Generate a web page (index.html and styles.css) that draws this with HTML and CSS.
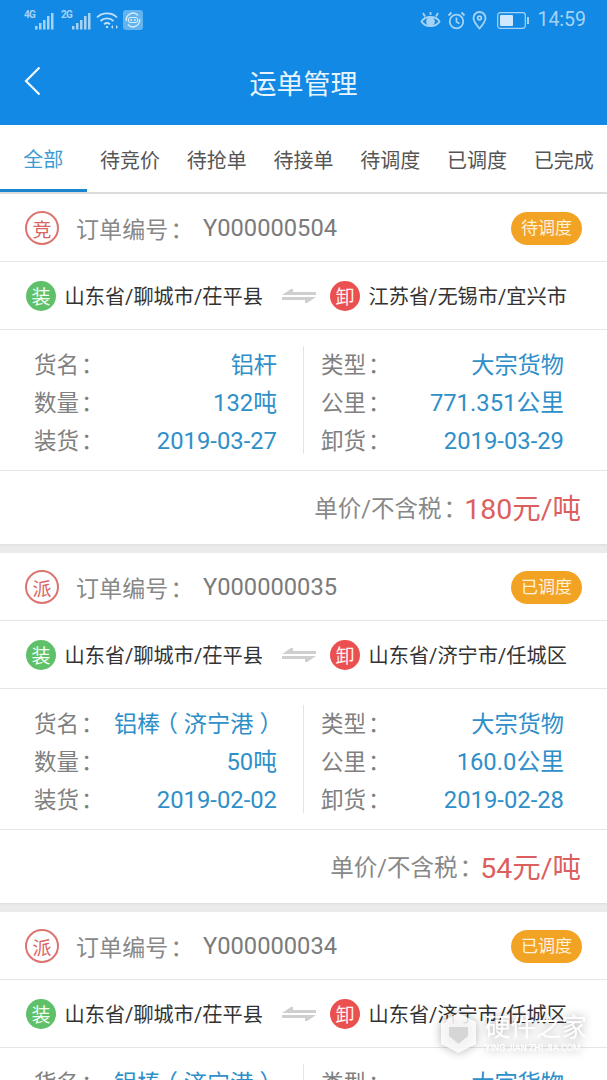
FILE: index.html
```html
<!DOCTYPE html>
<html lang="zh-CN">
<head>
<meta charset="utf-8">
<title>运单管理</title>
<link rel="stylesheet" href="styles.css">
</head>
<body>
<div class="screen">
  <header class="appbar">
    <div class="status">
      <div class="status-group">
        <span class="net"><small>4G</small><svg width="20" height="18" viewBox="0 0 20 18"><g fill="#a5d3f5"><rect x="0" y="14" width="2.500" height="3.500"/><rect x="4" y="11" width="2.500" height="6.500"/><rect x="8" y="8" width="2.500" height="9.500"/><rect x="12" y="4" width="2.500" height="13.500"/><rect x="16" y="1" width="2.500" height="16.500"/></g></svg></span>
        <span class="net net-2"><small>2G</small><svg width="20" height="18" viewBox="0 0 20 18"><g fill="#a5d3f5"><rect x="0" y="14" width="2.500" height="3.500"/><rect x="4" y="11" width="2.500" height="6.500"/><rect x="8" y="8" width="2.500" height="9.500"/><rect x="12" y="4" width="2.500" height="13.500"/><rect x="16" y="1" width="2.500" height="16.500"/></g></svg></span>
        <svg class="wifi" width="23" height="18" viewBox="0 0 23 18" fill="none" stroke="#bfe0f8" stroke-width="1.800"><path d="M1 6.500C6 1 16 1 21 6.500"/><path d="M4.500 10C8 6.500 14 6.500 17.500 10"/><path d="M8 13.200C9.800 11.800 12.200 11.800 14 13.200"/><circle cx="11" cy="16" r="1.200" fill="#bfe0f8" stroke="none"/><path d="M17 14l-2 2 2 2zM20 14l2 2-2 2z" fill="#bfe0f8" stroke="none"/></svg>
        <svg class="app" width="20" height="20" viewBox="0 0 20 20"><rect width="20" height="20" rx="3" fill="#61b4f0"/><path d="M3.500 11A6.600 6.600 0 0 1 15 5.500M16.500 9A6.600 6.600 0 0 1 5 14.500" fill="none" stroke="#d5ecfb" stroke-width="1.400"/><rect x="5.500" y="7.500" width="9" height="5" rx="1.500" fill="none" stroke="#d5ecfb" stroke-width="1"/><circle cx="8" cy="10" r=".9" fill="#d5ecfb"/><circle cx="12" cy="10" r=".9" fill="#d5ecfb"/></svg>
      </div>
      <div class="status-group status-right">
        <svg width="21" height="18" viewBox="0 0 21 18" fill="none" stroke="#a5d3f5" stroke-width="1.800"><path d="M1.500 10.500C5 4.500 16 4.500 19.500 10.500C16 16.500 5 16.500 1.500 10.500Z"/><circle cx="10.500" cy="10.500" r="3.500" fill="#a5d3f5"/><path d="M3 2l2 3.500M18 2l-2 3.500M10.500 1v3"/></svg>
        <svg width="19" height="19" viewBox="0 0 19 19" fill="none" stroke="#a5d3f5" stroke-width="1.800"><circle cx="9.500" cy="10.500" r="6.800"/><path d="M9.500 6.500v4.500l3 1.500M1.500 4.500l3-3M17.500 4.500l-3-3"/></svg>
        <svg width="15" height="19" viewBox="0 0 15 19" fill="none" stroke="#a5d3f5" stroke-width="1.800"><path d="M7.500 17.500C3.500 13 1.500 10 1.500 7a6 6 0 0 1 12 0c0 3-2 6-6 10.500Z"/><circle cx="7.500" cy="7" r="1.800"/></svg>
        <svg class="batt" width="32" height="17" viewBox="0 0 32 17"><rect x=".7" y=".7" width="27.600" height="15.600" rx="2.500" fill="none" stroke="#a5d3f5" stroke-width="1.200"/><rect x="3" y="3" width="13" height="11" rx="1" fill="#cfe8fb"/><rect x="30" y="5" width="2" height="7" fill="#a5d3f5"/></svg>
        <span class="clock">14:59</span>
      </div>
    </div>
    <div class="titlebar">
      <svg class="back" width="17" height="30" viewBox="0 0 17 30" fill="none" stroke="#f2f9ff" stroke-width="2.200"><path d="M15.500 1.500L2 15l13.500 13.500"/></svg>
      <h1 class="title">运单管理</h1>
    </div>
  </header>

  <nav class="tabs">
    <a class="tab tab-active">全部</a>
    <a class="tab">待竞价</a>
    <a class="tab">待抢单</a>
    <a class="tab">待接单</a>
    <a class="tab">待调度</a>
    <a class="tab">已调度</a>
    <a class="tab">已完成</a>
  </nav>

  <article class="card">
    <div class="card-head">
      <span class="stamp">竞</span>
      <span class="order-label">订单编号<span class="punct">：</span></span>
      <span class="order-no">Y000000504</span>
      <span class="badge">待调度</span>
    </div>
    <div class="route">
      <span class="dot dot-load">装</span>
      <span class="place">山东省/聊城市/茌平县</span>
      <svg class="swap" width="34" height="16" viewBox="0 0 34 16" fill="#cfcfcf"><path d="M0 7L9 1h2v3h23v3zM0 9h34L25 15h-2v-3H0z"/></svg>
      <span class="dot dot-unload">卸</span>
      <span class="place">江苏省/无锡市/宜兴市</span>
    </div>
    <div class="details">
      <dl class="col">
        <div class="row"><dt>货名<span class="punct">：</span></dt><dd class="val-text">铝杆</dd></div>
        <div class="row"><dt>数量<span class="punct">：</span></dt><dd>132吨</dd></div>
        <div class="row"><dt>装货<span class="punct">：</span></dt><dd>2019-03-27</dd></div>
      </dl>
      <dl class="col col-right">
        <div class="row"><dt>类型<span class="punct">：</span></dt><dd class="val-text">大宗货物</dd></div>
        <div class="row"><dt>公里<span class="punct">：</span></dt><dd>771.351公里</dd></div>
        <div class="row"><dt>卸货<span class="punct">：</span></dt><dd>2019-03-29</dd></div>
      </dl>
    </div>
    <div class="price"><span class="price-label">单价/不含税<span class="punct">：</span></span><span class="price-value">180元/吨</span></div>
  </article>

  <article class="card">
    <div class="card-head">
      <span class="stamp">派</span>
      <span class="order-label">订单编号<span class="punct">：</span></span>
      <span class="order-no">Y000000035</span>
      <span class="badge">已调度</span>
    </div>
    <div class="route">
      <span class="dot dot-load">装</span>
      <span class="place">山东省/聊城市/茌平县</span>
      <svg class="swap" width="34" height="16" viewBox="0 0 34 16" fill="#cfcfcf"><path d="M0 7L9 1h2v3h23v3zM0 9h34L25 15h-2v-3H0z"/></svg>
      <span class="dot dot-unload">卸</span>
      <span class="place">山东省/济宁市/任城区</span>
    </div>
    <div class="details">
      <dl class="col">
        <div class="row"><dt>货名<span class="punct">：</span></dt><dd class="val-text">铝棒<span class="paren">（</span>济宁港<span class="paren">）</span></dd></div>
        <div class="row"><dt>数量<span class="punct">：</span></dt><dd>50吨</dd></div>
        <div class="row"><dt>装货<span class="punct">：</span></dt><dd>2019-02-02</dd></div>
      </dl>
      <dl class="col col-right">
        <div class="row"><dt>类型<span class="punct">：</span></dt><dd class="val-text">大宗货物</dd></div>
        <div class="row"><dt>公里<span class="punct">：</span></dt><dd>160.0公里</dd></div>
        <div class="row"><dt>卸货<span class="punct">：</span></dt><dd>2019-02-28</dd></div>
      </dl>
    </div>
    <div class="price"><span class="price-label">单价/不含税<span class="punct">：</span></span><span class="price-value">54元/吨</span></div>
  </article>

  <article class="card">
    <div class="card-head">
      <span class="stamp">派</span>
      <span class="order-label">订单编号<span class="punct">：</span></span>
      <span class="order-no">Y000000034</span>
      <span class="badge">已调度</span>
    </div>
    <div class="route">
      <span class="dot dot-load">装</span>
      <span class="place">山东省/聊城市/茌平县</span>
      <svg class="swap" width="34" height="16" viewBox="0 0 34 16" fill="#cfcfcf"><path d="M0 7L9 1h2v3h23v3zM0 9h34L25 15h-2v-3H0z"/></svg>
      <span class="dot dot-unload">卸</span>
      <span class="place">山东省/济宁市/任城区</span>
    </div>
    <div class="details">
      <dl class="col">
        <div class="row"><dt>货名<span class="punct">：</span></dt><dd class="val-text">铝棒<span class="paren">（</span>济宁港<span class="paren">）</span></dd></div>
      </dl>
      <dl class="col col-right">
        <div class="row"><dt>类型<span class="punct">：</span></dt><dd class="val-text">大宗货物</dd></div>
      </dl>
    </div>
  </article>

  <div class="watermark">
    <svg width="37" height="42" viewBox="0 0 37 42"><path d="M18.500 1L36 10v22L18.500 41 1 32V10Z" fill="#fff" fill-opacity=".85"/><path d="M9 15h19v9l-9.500 8L9 24Z" fill="#c9c9c9" fill-opacity=".7"/></svg>
    <div class="wm-text">
      <span class="wm-cn">硬件之家</span>
      <span class="wm-en">YING JIAN ZHI JIA.COM</span>
    </div>
  </div>
</div>
</body>
</html>
```
FILE: styles.css
```css
* { box-sizing: border-box; margin: 0; padding: 0; }
html, body { background: #fff; }
body { font-family: Roboto, "Noto Sans CJK SC", sans-serif; }
.screen { position: relative; width: 607px; height: 1080px; overflow: hidden; background: #ebebeb; }
.punct { font-feature-settings: "halt"; padding: 0 9px 0 2px; }
.paren { font-feature-settings: "halt"; padding: 0 6px; }

.appbar { height: 125px; background: #1289e4; padding: 9px 21px 0 24px; }
.status { display: flex; justify-content: space-between; align-items: center; height: 22px; }
.status-group { display: flex; align-items: center; }
.status-right { gap: 6px; }
.net { display: flex; align-items: flex-start; width: 37px; }
.net small { font-size: 10px; font-weight: 700; line-height: 10px; color: #a5d3f5; width: 11px; letter-spacing: -.8px; }
.net svg { margin-top: 2px; }
.net-2 { width: 35px; }
.wifi { margin-right: 4px; }
.batt { margin-left: 4px; }
.clock { font-size: 19.500px; line-height: 22px; color: #a5d3f5; margin-left: 2px; }

.titlebar { position: relative; display: flex; justify-content: center; align-items: center; height: 36px; margin-top: 36px; margin-left: -24px; margin-right: -21px; }
.back { position: absolute; left: 24px; top: -1px; }
.title { font-size: 27px; font-weight: 400; line-height: 36px; color: #e8f5ff; }

.tabs { display: flex; height: 69px; background: #fff; border-bottom: 2px solid #dcdcdc; }
.tab { flex: 1; display: flex; align-items: center; justify-content: center; font-size: 20px; color: #555; height: 67px; padding-top: 2px; }
.tab-active { color: #3d9bd3; height: 67px; border-bottom: 3px solid #1b85d0; }

.card { background: #fff; margin-bottom: 9px; }
.card-head { display: flex; align-items: center; height: 68px; padding: 1px 25px 0; border-bottom: 1px solid #e6e6e6; }
.stamp { display: flex; align-items: center; justify-content: center; width: 34px; height: 34px; border: 2px solid #dc7471; border-radius: 50%; font-size: 19px; color: #d9645f; }
.order-label { width: 127px; margin-left: 17px; font-size: 23px; color: #888; letter-spacing: .100px; }
.order-no { font-size: 23.700px; color: #7b7b7b; }
.badge { margin-left: auto; width: 71px; height: 33px; border-radius: 17px; background: #f2a324; color: #fff2dd; font-size: 17px; line-height: 33px; text-align: center; }

.route { display: flex; align-items: center; height: 68px; padding-left: 26px; border-bottom: 1px solid #e6e6e6; }
.dot { display: flex; align-items: center; justify-content: center; width: 30px; height: 30px; border-radius: 50%; color: #f4fff4; font-size: 19px; }
.dot-load { background: #5fc06a; }
.dot-unload { background: #ea5050; color: #fff0f0; }
.place { width: 197.500px; margin-left: 8.500px; font-size: 20.200px; color: #333; white-space: nowrap; }
.swap { margin: 0 14px 0 20px; }

.details { display: flex; height: 141px; padding-top: 16px; border-bottom: 1px solid #e6e6e6; }
.col { width: 303px; height: 108px; padding: 0 26px 0 34px; }
.col-right { width: 304px; padding: 0 43px 0 17px; border-left: 1px solid #e3e3e3; }
.row { display: flex; justify-content: space-between; height: 38px; line-height: 38px; font-size: 23px; white-space: nowrap; }
.row dt { color: #808080; font-size: 22.500px; }
.row dd { color: #2f8fc9; font-size: 23.800px; }
.row .val-text { font-size: 23.200px; }

.price { display: flex; justify-content: flex-end; align-items: center; height: 73px; padding: 0 26px 2px 0; box-shadow: 0 1px 2px #dcdcdc; }
.price-label { font-size: 23.500px; color: #888; }
.price-value { font-size: 28.500px; color: #dc5f5f; }

.watermark { position: absolute; left: 440px; top: 1012px; display: flex; gap: 8px; align-items: center; filter: drop-shadow(0 0 5px rgba(0,0,0,.35)); }
.wm-text { display: flex; flex-direction: column; width: 101px; color: #fff; }
.wm-cn { font-size: 25.500px; line-height: 30px; white-space: nowrap; }
.wm-en { font-size: 9px; font-weight: 500; line-height: 12px; letter-spacing: -.1px; white-space: nowrap; }
```
